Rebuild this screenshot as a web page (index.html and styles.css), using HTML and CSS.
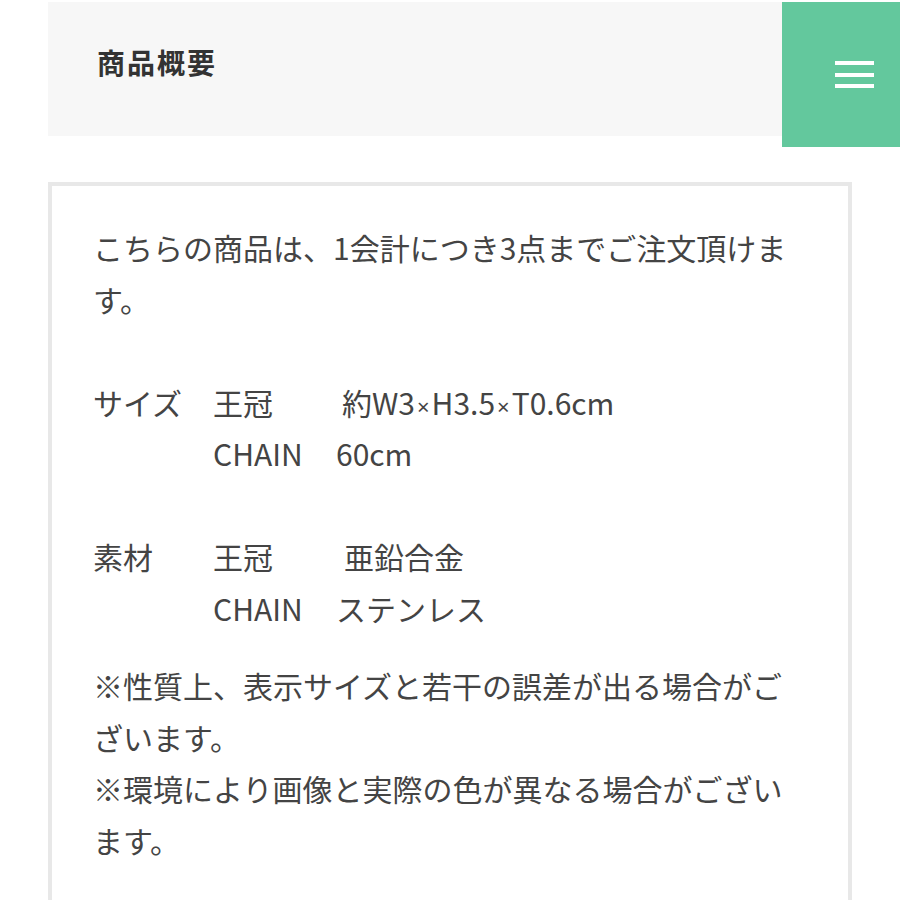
FILE: index.html
```html
<!DOCTYPE html>
<html lang="ja">
<head>
<meta charset="utf-8">
<title>商品概要</title>
<link rel="stylesheet" href="styles.css">
</head>
<body>
<div class="top">
  <div class="header"><h1 class="title">商品概要</h1></div>
  <div class="menu" aria-label="menu">
    <span class="bar"></span>
    <span class="bar"></span>
    <span class="bar"></span>
  </div>
</div>
<div class="box">
  <p class="lead">こちらの商品は、1会計につき3点までご注文頂けます。</p>
  <div class="specs">
    <div class="spec-row"><span class="label">サイズ</span><span class="key">王冠</span><span class="val shift">約W3<span class="times">×</span>H3.5<span class="times">×</span>T0.6cm</span></div>
    <div class="spec-row"><span class="label"></span><span class="key">CHAIN</span><span class="val">60cm</span></div>
  </div>
  <div class="specs">
    <div class="spec-row"><span class="label">素材</span><span class="key">王冠</span><span class="val shift2">亜鉛合金</span></div>
    <div class="spec-row"><span class="label"></span><span class="key">CHAIN</span><span class="val">ステンレス</span></div>
  </div>
  <div class="notes">
    <p class="note">※性質上、表示サイズと若干の誤差が出る場合がございます。</p>
    <p class="note">※環境により画像と実際の色が異なる場合がございます。</p>
  </div>
</div>
</body>
</html>
```
FILE: styles.css
```css
html, body {
  margin: 0;
  padding: 0;
  background: #ffffff;
}
body {
  font-family: "Noto Sans CJK JP", "Noto Sans", sans-serif;
  color: #444444;
  overflow: hidden;
}
.top {
  display: flex;
  align-items: flex-start;
  margin-top: 2px;
  padding-left: 48px;
}
.header {
  flex: 1;
  height: 134px;
  background: #f7f7f7;
  padding: 40px 0 0 49px;
  box-sizing: border-box;
}
.title {
  margin: 0;
  font-size: 28px;
  line-height: 40px;
  font-weight: 700;
  letter-spacing: 2px;
  color: #333333;
}
.menu {
  width: 118px;
  height: 145px;
  background: #63c89d;
  display: flex;
  flex-direction: column;
  justify-content: center;
  gap: 7.5px;
  padding-left: 53px;
  box-sizing: border-box;
}
.bar {
  display: block;
  width: 39px;
  height: 4px;
  background: #ffffff;
}
.box {
  margin: 35px 48px 0 48px;
  border: 4px solid #e8e8e8;
  border-bottom: none;
  padding: 36px 41px 60px 41px;
  font-size: 30px;
  line-height: 51.5px;
}
.lead {
  margin: 0 0 51.5px 0;
}
.specs {
  margin-bottom: 51.5px;
}
.specs + .notes {
  margin-top: -25.5px;
}
.spec-row {
  display: grid;
  grid-template-columns: 120px 123px auto;
}
.shift {
  padding-left: 6px;
}
.shift2 {
  padding-left: 8px;
}
.times {
  font-family: "Noto Sans", sans-serif;
  font-size: 22px;
  line-height: 0;
  padding: 0 2px;
}
.note {
  margin: 0;
}
```
